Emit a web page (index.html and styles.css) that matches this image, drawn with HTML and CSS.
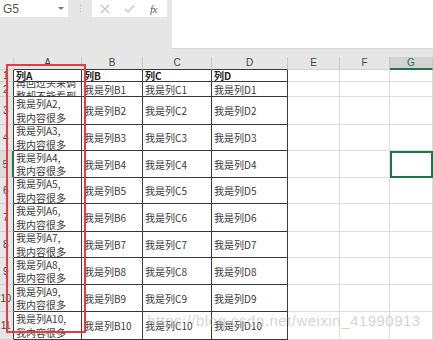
FILE: index.html
```html
<!DOCTYPE html>
<html lang="zh">
<head>
<meta charset="utf-8">
<link rel="stylesheet" href="styles.css">
</head>
<body>
<div class="app">
  <div class="toolbar">
    <div class="namebox"><span class="cellref">G5</span><span class="caret"></span></div>
    <div class="grip"><span></span><span></span><span></span></div>
    <div class="fbuttons">
      <svg class="ico" width="10" height="10" viewBox="0 0 10 10"><path d="M1 1L9 9M9 1L1 9" stroke="#c4c4c4" stroke-width="1.2" fill="none"/></svg>
      <svg class="ico" width="11" height="10" viewBox="0 0 11 10"><path d="M1 5L4 8L10 1.5" stroke="#c4c4c4" stroke-width="1.2" fill="none"/></svg>
      <span class="fx">fx</span>
    </div>
    <div class="finput"></div>
  </div>

  <div class="sheet">
    <div class="grid">
      <div class="corner"></div>
      <div class="ch">A</div><div class="ch">B</div><div class="ch">C</div><div class="ch">D</div>
      <div class="ch lt">E</div><div class="ch lt">F</div><div class="ch lt sel">G</div>

      <div class="rh">1</div>
      <div class="c d hd">列A</div><div class="c d hd">列B</div><div class="c d hd">列C</div><div class="c d hd">列D</div>
      <div class="c"></div><div class="c"></div><div class="c"></div>

      <div class="rh">2</div>
      <div class="c d two">再回过头来调<br>整却不能看到</div><div class="c d">我是列B1</div><div class="c d">我是列C1</div><div class="c d">我是列D1</div>
      <div class="c"></div><div class="c"></div><div class="c"></div>

      <div class="rh">3</div>
      <div class="c d two">我是列A2,<br>我内容很多</div><div class="c d">我是列B2</div><div class="c d">我是列C2</div><div class="c d">我是列D2</div>
      <div class="c"></div><div class="c"></div><div class="c"></div>

      <div class="rh">4</div>
      <div class="c d two">我是列A3,<br>我内容很多</div><div class="c d">我是列B3</div><div class="c d">我是列C3</div><div class="c d">我是列D3</div>
      <div class="c"></div><div class="c"></div><div class="c"></div>

      <div class="rh selrow">5</div>
      <div class="c d two">我是列A4,<br>我内容很多</div><div class="c d">我是列B4</div><div class="c d">我是列C4</div><div class="c d">我是列D4</div>
      <div class="c"></div><div class="c"></div><div class="c active"></div>

      <div class="rh">6</div>
      <div class="c d two">我是列A5,<br>我内容很多</div><div class="c d">我是列B5</div><div class="c d">我是列C5</div><div class="c d">我是列D5</div>
      <div class="c"></div><div class="c"></div><div class="c"></div>

      <div class="rh">7</div>
      <div class="c d two">我是列A6,<br>我内容很多</div><div class="c d">我是列B6</div><div class="c d">我是列C6</div><div class="c d">我是列D6</div>
      <div class="c"></div><div class="c"></div><div class="c"></div>

      <div class="rh">8</div>
      <div class="c d two">我是列A7,<br>我内容很多</div><div class="c d">我是列B7</div><div class="c d">我是列C7</div><div class="c d">我是列D7</div>
      <div class="c"></div><div class="c"></div><div class="c"></div>

      <div class="rh">9</div>
      <div class="c d two">我是列A8,<br>我内容很多</div><div class="c d">我是列B8</div><div class="c d">我是列C8</div><div class="c d">我是列D8</div>
      <div class="c"></div><div class="c"></div><div class="c"></div>

      <div class="rh">10</div>
      <div class="c d two">我是列A9,<br>我内容很多</div><div class="c d">我是列B9</div><div class="c d">我是列C9</div><div class="c d">我是列D9</div>
      <div class="c"></div><div class="c"></div><div class="c"></div>

      <div class="rh">11</div>
      <div class="c d two">我是列A10,<br>我内容很多</div><div class="c d">我是列B10</div><div class="c d">我是列C10</div><div class="c d">我是列D10</div>
      <div class="c"></div><div class="c"></div><div class="c"></div>
    </div>
    <div class="redbox"></div>
    <div class="watermark">https://blog.csdn.net/weixin_41990913</div>
  </div>
</div>
</body>
</html>
```

FILE: styles.css
```css
* { box-sizing: border-box; }
html, body { margin: 0; padding: 0; }
body {
  background: #e6e6e6;
  font-family: "Noto Sans CJK SC", "Noto Sans", sans-serif;
  width: 433px;
  height: 340px;
  overflow: hidden;
}
.app { display: flex; flex-direction: column; }

.toolbar {
  display: flex;
  align-items: flex-start;
  height: 57px;
}
.namebox {
  width: 68px;
  height: 17px;
  background: #fff;
  display: flex;
  align-items: center;
  justify-content: space-between;
  padding: 0 4px 0 3px;
}
.cellref {
  font-family: "Liberation Sans", Arial, sans-serif;
  font-size: 12px;
  color: #555;
}
.caret {
  width: 0; height: 0;
  border-left: 3px solid transparent;
  border-right: 3px solid transparent;
  border-top: 3px solid #777;
}
.grip {
  width: 24px;
  height: 17px;
  display: flex;
  flex-direction: column;
  align-items: center;
  justify-content: center;
  gap: 2px;
}
.grip span { width: 1px; height: 1px; background: #b8b8b8; }
.fbuttons {
  width: 75px;
  height: 17px;
  background: #fff;
  display: flex;
  align-items: center;
  padding-left: 8px;
  gap: 14px;
}
.fx {
  font-family: "Liberation Serif", serif;
  font-style: italic;
  font-size: 11px;
  color: #555;
  letter-spacing: -0.5px;
  margin-left: 1px;
}
.finput {
  margin-left: 5px;
  flex: 1;
  height: 49px;
  background: #fff;
  border-bottom: 1px solid #d6d6d6;
}

.sheet { position: relative; }
.grid {
  display: grid;
  grid-template-columns: 14px 68px 61px 69px 76px 52px 50px 43px;
  grid-template-rows: 13px 12px 15px 28px 26px 27px 26px 28px 26px 27px 27px 28px;
  background: #fff;
}
.corner { background: #e6e6e6; border-right: 1px solid #cfcfcf; border-bottom: 1px solid #cfcfcf; }
.ch {
  background: #e6e6e6;
  font-family: "Liberation Sans", Arial, sans-serif;
  font-size: 10px;
  color: #444;
  text-align: center;
  line-height: 12px;
  border-right: 1px solid #c9c9c9;
  border-bottom: 1px solid #3a3a3a;
}
.ch.lt { border-bottom: 1px solid #d4d4d4; }
.ch.sel {
  background: #d3d3d3;
  color: #217346;
  border-bottom: 2px solid #217346;
  line-height: 11px;
}
.rh {
  background: #e6e6e6;
  font-family: "Liberation Sans", Arial, sans-serif;
  font-size: 10px;
  color: #444;
  display: flex;
  align-items: center;
  justify-content: center;
  padding-right: 2px;
  overflow: hidden;
  white-space: nowrap;
  border-right: 1px solid #3a3a3a;
  border-bottom: 1px solid #d0d0d0;
  letter-spacing: -0.5px;
}
.rh.selrow { color: #217346; border-right: 2px solid #217346; background: #dcdcdc; }
.c {
  border-right: 1px solid #dedede;
  border-bottom: 1px solid #dedede;
  font-size: 10px;
  color: #3a3a3a;
  display: flex;
  align-items: center;
  padding-left: 2px;
  overflow: hidden;
  white-space: nowrap;
}
.c.d {
  border-right: 1px solid #3a3a3a;
  border-bottom: 1px solid #3a3a3a;
}
.c.hd { font-weight: bold; color: #222; }
.c.two { line-height: 13.5px; }
.c.active { border: 2px solid #217346; }

.redbox {
  position: absolute;
  left: 6px;
  top: 7px;
  width: 80px;
  height: 269px;
  border: 2px solid #ea3a3d;
}
.watermark {
  position: absolute;
  left: 147px;
  top: 255px;
  font-family: "Liberation Sans", Arial, sans-serif;
  font-size: 15px;
  letter-spacing: 0.5px;
  color: rgba(175, 175, 175, 0.55);
  white-space: nowrap;
}
```
